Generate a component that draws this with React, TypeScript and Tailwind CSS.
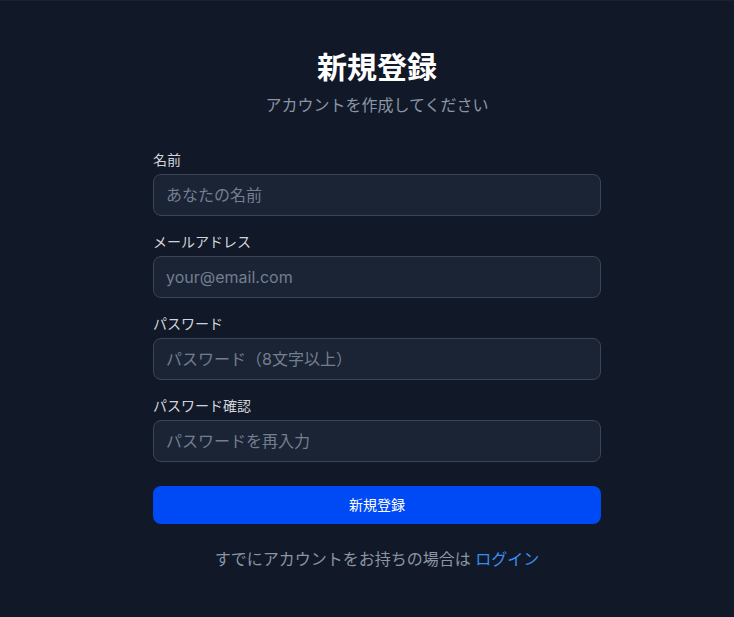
export default function App() {
  const fields = [
    { label: "名前", type: "text", placeholder: "あなたの名前" },
    { label: "メールアドレス", type: "email", placeholder: "your@email.com" },
    { label: "パスワード", type: "password", placeholder: "パスワード（8文字以上）" },
    { label: "パスワード確認", type: "password", placeholder: "パスワードを再入力" },
  ];

  return (
    <div
      className="min-h-[617px] border-t border-[#1c2328] bg-[#111827] pl-[20px] pt-[48px]"
      style={{ fontFamily: '"Inter", "Noto Sans CJK JP", sans-serif' }}
    >
      <div className="mx-auto w-[448px]">
        <div className="text-center">
          <h1 className="text-3xl font-bold text-white">新規登録</h1>
          <p className="mt-2 text-base text-[#8b95a5]">アカウントを作成してください</p>
        </div>

        <form className="mt-[33px] space-y-4" onSubmit={(e) => e.preventDefault()}>
          {fields.map((f) => (
            <div key={f.label}>
              <label className="mb-1 block text-sm text-[#d1d5db]">{f.label}</label>
              <input
                type={f.type}
                placeholder={f.placeholder}
                className="h-[42px] w-full rounded-lg border border-[#3a4556] bg-[#1b2434] px-3 text-base text-white placeholder:text-[#727e92] focus:outline-none"
              />
            </div>
          ))}

          <div className="pt-2">
            <button
              type="submit"
              className="h-[38px] w-full rounded-lg bg-[#004af5] text-sm text-white"
            >
              新規登録
            </button>
          </div>
        </form>

        <p className="mt-[23px] text-center text-base text-[#8b95a5]">
          すでにアカウントをお持ちの場合は <a href="#" className="text-[#3b8ef0]">ログイン</a>
        </p>
      </div>
    </div>
  );
}
